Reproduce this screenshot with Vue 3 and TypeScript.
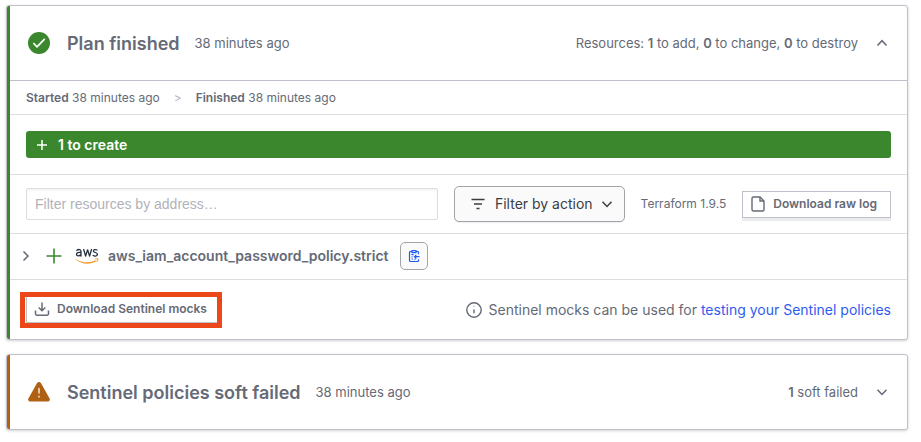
<script setup lang="ts">
import { ref } from 'vue'

interface ResourceCount {
  count: number
  label: string
}

const counts: ResourceCount[] = [
  { count: 1, label: 'to add' },
  { count: 0, label: 'to change' },
  { count: 0, label: 'to destroy' },
]
const address = 'aws_iam_account_password_policy.strict'
const elapsed = '38 minutes ago'
const query = ref('')
</script>

<template>
  <main class="page">
    <section class="card card-success">
      <header class="card-header">
        <svg class="status" viewBox="0 0 22 22" aria-hidden="true">
          <circle cx="11" cy="11" r="11" fill="#3b872e" />
          <path d="M5.8 11.5l3.2 3.3 7.3-7.5" fill="none" stroke="#fff" stroke-width="1.7" stroke-linecap="round" stroke-linejoin="round" />
        </svg>
        <h2 class="title">Plan finished</h2>
        <span class="when">{{ elapsed }}</span>
        <span class="summary">Resources: <template v-for="(item, i) in counts" :key="item.label"><b>{{ item.count }}</b> {{ item.label }}<template v-if="i < counts.length - 1">, </template></template></span>
        <button class="toggle" type="button" aria-label="Collapse plan">
          <svg viewBox="0 0 12 12" aria-hidden="true"><path d="M1.5 8.5L6 3.7l4.5 4.8" /></svg>
        </button>
      </header>

      <div class="timeline">
        <span><b>Started</b> {{ elapsed }}</span>
        <span class="separator">&gt;</span>
        <span><b>Finished</b> {{ elapsed }}</span>
      </div>

      <div class="changes">
        <div class="create-bar">
          <svg viewBox="0 0 12 12" aria-hidden="true"><path d="M6 1v10M1 6h10" /></svg>
          <span>1 to create</span>
        </div>
      </div>

      <div class="filters">
        <input v-model="query" class="search" type="text" aria-label="Filter resources by address" placeholder="Filter resources by address…" />
        <button class="filter-button" type="button">
          <svg class="filter-icon" viewBox="0 0 16 16" aria-hidden="true"><path d="M1.5 3.5h13M4 8h8M6.5 12.5h3" /></svg>
          <span>Filter by action</span>
          <svg class="filter-caret" viewBox="0 0 12 12" aria-hidden="true"><path d="M1.5 3.8L6 8.4l4.5-4.6" /></svg>
        </button>
        <span class="version">Terraform 1.9.5</span>
        <button class="plain-button log-button" type="button">
          <svg class="file-icon" viewBox="0 0 14 16" aria-hidden="true">
            <path d="M2.5 1H9l4 4v8.500a1.500 1.500 0 0 1-1.500 1.500h-9A1.500 1.500 0 0 1 1 13.500v-11A1.500 1.500 0 0 1 2.500 1z" />
            <path d="M9 1v4h4" />
          </svg>
          <span>Download raw log</span>
        </button>
      </div>

      <div class="resource">
        <button class="expand" type="button" aria-label="Expand resource">
          <svg viewBox="0 0 12 12" aria-hidden="true"><path d="M3.500 1.500L8 6l-4.500 4.500" /></svg>
        </button>
        <svg class="add-icon" viewBox="0 0 16 16" aria-hidden="true"><path d="M8 .5v15M.5 8h15" /></svg>
        <svg class="aws-logo" viewBox="0 0 24 16" role="img" aria-label="AWS">
          <g fill="none" stroke="#252f3e" stroke-width="1.300" stroke-linecap="round" stroke-linejoin="round">
            <path d="M1.900 2.300C3.200 1.200 6 1 6 3.300V8M6 4.600C3.800 4.200 1.500 4.600 1.500 6.300 1.500 8.500 4.700 8.300 6 6.500" />
            <path d="M8.700 1.500l1.900 6.600 2-6.300 2 6.300 1.900-6.600" />
            <path d="M22 2c-1.500-.8-3.600-.6-3.600.9 0 2 4 1.200 4 3.400 0 2-2.800 2.200-4.200 1.200" />
          </g>
          <path d="M.6 10.900C6.800 15 14.500 15.200 21 12.300c.6-.2 1 .4.5.8C15.600 17 6.400 16.700.4 11.300c-.3-.3-.1-.6.2-.4z" fill="#f29b27" />
          <path d="M19.400 11.100c1.300-.9 3.500-.9 3.900-.5.400.5-.1 2.800-1.300 3.900-.2.200-.5.100-.3-.2.500-1 .900-2.500.7-2.800-.3-.3-1.900-.2-2.800-.1-.3 0-.4-.2-.2-.3z" fill="#f29b27" />
        </svg>
        <span class="address">{{ address }}</span>
        <button class="copy-button" type="button" aria-label="Copy address">
          <svg viewBox="0 0 12 12" aria-hidden="true">
            <path d="M3.500 1.500h-1a1 1 0 0 0-1 1v8a1 1 0 0 0 1 1h7a1 1 0 0 0 1-1V9.300M10.500 4.300V2.500a1 1 0 0 0-1-1h-1M4 .6h4v2H4zM11.500 6.700H6.500M8.300 4.900L6.500 6.700l1.800 1.800M3.500 4.600h2M3.500 6.800h1M3.500 9h1.500M6.500 9.300h1" />
          </svg>
        </button>
      </div>

      <footer class="mocks">
        <div class="highlight">
          <button class="plain-button mocks-button" type="button">
            <svg class="download-icon" viewBox="0 0 16 16" aria-hidden="true"><path d="M8 1.500v8M4.700 6.500L8 9.800l3.300-3.300M1.500 9.500v3.200a1.500 1.500 0 0 0 1.500 1.500h10a1.500 1.500 0 0 0 1.500-1.500V9.500" /></svg>
            <span>Download Sentinel mocks</span>
          </button>
        </div>
        <p class="hint">
          <svg viewBox="0 0 16 16" aria-hidden="true">
            <circle cx="8" cy="8" r="7.200" />
            <path d="M8 7.500v3.800M8 4.600v.5" />
          </svg>
          <span>Sentinel mocks can be used for <a href="#">testing your Sentinel policies</a></span>
        </p>
      </footer>
    </section>

    <section class="card card-warning">
      <header class="card-header">
        <svg class="status" viewBox="0 0 22 22" aria-hidden="true">
          <path d="M9.100 2.100a2.200 2.200 0 0 1 3.800 0l8.700 15.500A2 2 0 0 1 19.900 20.600H2.100A2 2 0 0 1 .4 17.600z" fill="#b06012" />
          <path d="M11 7.500v4.500M11 15.300v.6" fill="none" stroke="#f4e4d4" stroke-width="1.500" stroke-linecap="round" />
        </svg>
        <h2 class="title">Sentinel policies soft failed</h2>
        <span class="when">{{ elapsed }}</span>
        <span class="summary"><b>1</b> soft failed</span>
        <button class="toggle" type="button" aria-label="Expand policies">
          <svg viewBox="0 0 12 12" aria-hidden="true"><path d="M1.500 3.700L6 8.500l4.500-4.800" /></svg>
        </button>
      </header>
    </section>
  </main>
</template>

<style>
body {
  margin: 0;
  background: #fff;
}
</style>

<style scoped>
* {
  box-sizing: border-box;
}

.page {
  display: flex;
  flex-direction: column;
  gap: 14px;
  padding: 5px 13px 11px 6px;
  color: #656a76;
  font: 13px/20px Inter, "Liberation Sans", sans-serif;
}

button {
  padding: 0;
  border: 0;
  background: none;
  color: inherit;
  font: inherit;
  cursor: pointer;
}

svg {
  display: block;
  flex: none;
  fill: none;
  stroke: currentColor;
}

b {
  font-weight: 600;
}

.card {
  position: relative;
  border: 1px solid #bfc0ca;
  border-radius: 3px;
  background: #fff;
  box-shadow: 0 1px 3px #0000002e;
  padding-left: 3px;
}

.card::before {
  content: "";
  position: absolute;
  inset: 0 auto 0 0;
  width: 3px;
  border-radius: 2px 0 0 2px;
}

.card-success::before {
  background: #3b872e;
}

.card-warning::before {
  background: #b06012;
}

.card-header {
  display: flex;
  align-items: center;
  height: 74px;
  padding: 0 17px 0 18px;
}

.status {
  width: 22px;
  height: 22px;
  margin-right: 17px;
  stroke: none;
}

.title {
  margin: 0 15px 0 0;
  padding-top: 2px;
  font-size: 18px;
  font-weight: 600;
  line-height: 24px;
}

.when,
.summary {
  white-space: nowrap;
}

.summary {
  margin-left: auto;
}

.toggle {
  margin-left: 16px;
  padding: 2px;
}

.toggle svg {
  width: 12px;
  height: 12px;
  stroke-width: 1.5;
}

.timeline {
  display: flex;
  align-items: center;
  gap: 14px;
  height: 35px;
  padding: 0 16px;
  border-top: 1px solid #bfc0ca;
  border-bottom: 1px solid #dcdde2;
  font-size: 12px;
}

.separator {
  color: #b4b6bf;
}

.changes {
  padding: 16px;
  border-bottom: 1px solid #dcdde2;
}

.create-bar {
  display: flex;
  align-items: center;
  gap: 10px;
  height: 27px;
  padding: 0 10px;
  border-radius: 3px;
  background: #3b872e;
  color: #fff;
  font-size: 14px;
  font-weight: 600;
}

.create-bar svg {
  width: 12px;
  height: 12px;
  stroke-width: 1.5;
}

.filters {
  display: flex;
  align-items: center;
  height: 59px;
  padding: 0 16px;
  border-bottom: 1px solid #dcdde2;
}

.search {
  flex: 1;
  min-width: 0;
  height: 32px;
  margin-right: 16px;
  padding: 0 8px;
  border: 1px solid #dcdde2;
  border-radius: 2px;
  outline: none;
  box-shadow: inset 0 2px 2px #0000000a;
  color: #3b3d45;
  font: 14px/20px "Liberation Sans", sans-serif;
}

.search::placeholder {
  color: #b1b3b8;
  opacity: 1;
}

.filter-button {
  display: flex;
  align-items: center;
  height: 36px;
  padding: 0 11px 0 15px;
  border: 1px solid #a2a4a9;
  border-radius: 5px;
  background: #fafafa;
  box-shadow: 0 1px 1px #656a761f;
  color: #3b3d45;
  font-size: 14px;
  white-space: nowrap;
}

.filter-icon {
  width: 16px;
  height: 16px;
  margin-right: 9px;
  stroke-width: 1.5;
}

.filter-caret {
  width: 12px;
  height: 12px;
  margin-left: 8px;
  stroke-width: 1.5;
}

.version {
  margin: 0 16px;
  font-size: 12px;
  white-space: nowrap;
}

.plain-button {
  display: flex;
  align-items: center;
  height: 27px;
  border: 1px solid #bfc0ca;
  background: #fff;
  font-size: 12px;
  font-weight: 600;
  white-space: nowrap;
}

.log-button {
  padding: 0 13px 0 8px;
  box-shadow: 0 3px 0 #ebecee;
}

.file-icon {
  width: 14px;
  height: 16px;
  margin-right: 8px;
  stroke-width: 1.4;
}

.resource {
  display: flex;
  align-items: center;
  height: 46px;
  padding: 0 16px 1px 10px;
  border-bottom: 1px solid #dcdde2;
}

.expand svg {
  width: 12px;
  height: 12px;
  stroke-width: 1.5;
}

.add-icon {
  width: 16px;
  height: 16px;
  margin: 0 13px 0 14px;
  color: #3b872e;
  stroke-width: 1.6;
}

.aws-logo {
  width: 24px;
  height: 16px;
  margin-right: 9px;
  stroke: none;
}

.address {
  margin-right: 11px;
  font-size: 14px;
  font-weight: 600;
}

.copy-button {
  display: flex;
  align-items: center;
  justify-content: center;
  width: 28px;
  height: 28px;
  border: 1px solid #a2a4a9;
  border-radius: 5px;
  background: #fafafa;
  color: #1f5cf5;
}

.copy-button svg {
  width: 12px;
  height: 12px;
  stroke-width: 1.2;
}

.mocks {
  display: flex;
  align-items: center;
  justify-content: space-between;
  height: 59px;
  padding: 0 16px 0 10px;
}

.highlight {
  border: 5px solid #ec4719;
  padding-left: 1px;
}

.mocks-button {
  height: 26px;
  padding: 0 10px 0 7px;
  border-width: 0 0 1px 1px;
}

.download-icon {
  width: 16px;
  height: 16px;
  margin-right: 7px;
  stroke-width: 1.5;
}

.hint {
  display: flex;
  align-items: center;
  gap: 7px;
  margin: 0;
  font-size: 14px;
}

.hint svg {
  width: 16px;
  height: 16px;
  stroke-width: 1.4;
}

.hint a {
  color: #2f5bf0;
  text-decoration: none;
}
</style>
